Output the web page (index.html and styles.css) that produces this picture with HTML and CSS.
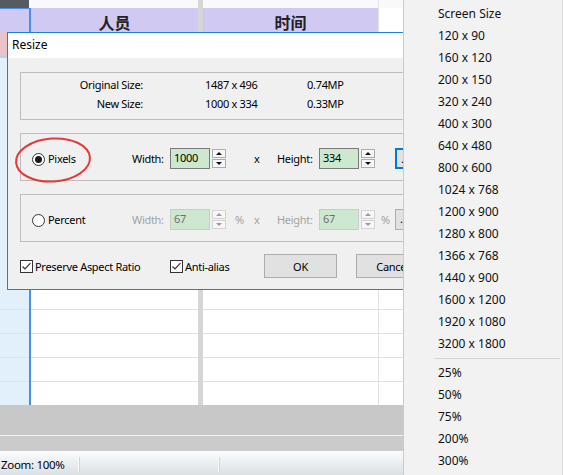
FILE: index.html
```html
<!DOCTYPE html>
<html lang="en">
<head>
<meta charset="utf-8">
<title>Resize</title>
<link rel="stylesheet" href="styles.css">
</head>
<body>
<div class="app">
  <div class="sheet">
    <div class="row r-top"><div class="c0"></div><div class="bl"></div><div class="c1"></div><div class="sep"></div><div class="c2"></div><div class="vl"></div><div class="c3"></div></div>
    <div class="row r-head"><div class="c0"></div><div class="bl"></div><div class="c1">人员</div><div class="sep"></div><div class="c2">时间</div><div class="vl"></div><div class="c3"></div></div>
    <div class="row r-body r-big"><div class="c0"><div class="pink"></div></div><div class="bl"></div><div class="c1"></div><div class="sep"></div><div class="c2"></div><div class="vl"></div><div class="c3"></div></div>
    <div class="row r-body r-n"><div class="c0"></div><div class="bl"></div><div class="c1"></div><div class="sep"></div><div class="c2"></div><div class="vl"></div><div class="c3"></div></div>
    <div class="row r-body r-n"><div class="c0"></div><div class="bl"></div><div class="c1"></div><div class="sep"></div><div class="c2"></div><div class="vl"></div><div class="c3"></div></div>
    <div class="row r-body r-n"><div class="c0"></div><div class="bl"></div><div class="c1"></div><div class="sep"></div><div class="c2"></div><div class="vl"></div><div class="c3"></div></div>
    <div class="row r-body r-last"><div class="c0"></div><div class="bl"></div><div class="c1"></div><div class="sep"></div><div class="c2"></div><div class="vl"></div><div class="c3"></div></div>
  </div>
  <div class="g1"></div>
  <div class="g-line"></div>
  <div class="g2"></div>
  <div class="status">
    <span class="zoom">Zoom: 100%</span>
    <span class="sbsep"></span>
    <span class="pane"></span>
    <span class="sbsep"></span>
  </div>

  <div class="dialog">
    <div class="titlebar">Resize</div>
    <div class="dbody">
      <div class="group info">
        <div class="info-row"><span class="lbl">Original Size:</span><span class="v1">1487 x 496</span><span class="v2">0.74MP</span></div>
        <div class="info-row"><span class="lbl">New Size:</span><span class="v1">1000 x 334</span><span class="v2">0.33MP</span></div>
      </div>

      <div class="group opt-group g-pixels">
        <label class="opt"><span class="radio on"></span><span>Pixels</span></label>
        <span class="flbl">Width:</span>
        <span class="field">1000</span>
        <span class="spin"><span class="up"></span><span class="down"></span></span>
        <span class="unit"></span>
        <span class="times">x</span>
        <span class="hlbl">Height:</span>
        <span class="field">334</span>
        <span class="spin"><span class="up"></span><span class="down"></span></span>
        <span class="unit2"></span>
        <span class="dots focus">...</span>
      </div>

      <div class="group opt-group g-percent">
        <label class="opt"><span class="radio"></span><span>Percent</span></label>
        <span class="flbl dis">Width:</span>
        <span class="field dis">67</span>
        <span class="spin dis"><span class="up"></span><span class="down"></span></span>
        <span class="unit dis">%</span>
        <span class="times dis">x</span>
        <span class="hlbl dis">Height:</span>
        <span class="field dis">67</span>
        <span class="spin dis"><span class="up"></span><span class="down"></span></span>
        <span class="unit2 dis">%</span>
        <span class="dots">...</span>
      </div>

      <div class="actions">
        <label class="chk chk1"><span class="box"><svg viewBox="0 0 11 11" width="11" height="11"><path d="M1.5 5.5 L4 8 L9.5 2.2" fill="none" stroke="#333" stroke-width="1.2"/></svg></span><span>Preserve Aspect Ratio</span></label>
        <label class="chk chk2"><span class="box"><svg viewBox="0 0 11 11" width="11" height="11"><path d="M1.5 5.5 L4 8 L9.5 2.2" fill="none" stroke="#333" stroke-width="1.2"/></svg></span><span>Anti-alias</span></label>
        <span class="btn">OK</span>
        <span class="btn">Cancel</span>
      </div>
    </div>
  </div>

  <svg class="mark" width="84" height="52" viewBox="0 0 84 52"><ellipse cx="40" cy="25" rx="37" ry="21.5" fill="none" stroke="#e23b3b" stroke-width="2" transform="rotate(-4 40 25)"/></svg>

  <div class="menu">
    <div class="mi">Screen Size</div>
    <div class="mi">120 x 90</div>
    <div class="mi">160 x 120</div>
    <div class="mi">200 x 150</div>
    <div class="mi">320 x 240</div>
    <div class="mi">400 x 300</div>
    <div class="mi">640 x 480</div>
    <div class="mi">800 x 600</div>
    <div class="mi">1024 x 768</div>
    <div class="mi">1200 x 900</div>
    <div class="mi">1280 x 800</div>
    <div class="mi">1366 x 768</div>
    <div class="mi">1440 x 900</div>
    <div class="mi">1600 x 1200</div>
    <div class="mi">1920 x 1080</div>
    <div class="mi">3200 x 1800</div>
    <div class="msep"></div>
    <div class="mi">25%</div>
    <div class="mi">50%</div>
    <div class="mi">75%</div>
    <div class="mi">200%</div>
    <div class="mi">300%</div>
  </div>
</div>
</body>
</html>
```

FILE: styles.css
```css
* { box-sizing: border-box; margin: 0; padding: 0; }
html, body { width: 563px; height: 475px; overflow: hidden; }
body {
  font-family: "Noto Sans", "Liberation Sans", sans-serif;
  font-size: 11px;
  color: #000;
  background: #fff;
}
.app { position: relative; width: 563px; height: 475px; overflow: hidden; }

/* spreadsheet background */
.row { display: grid; grid-template-columns: 29px 2px 167px 5px 175px 1px 1fr; }
.r-top { height: 8px; background: #f8f9fa; }
.r-top .c0 { background: #575b60; }
.r-top .sep { background: #d6d6d6; }
.r-top .vl { background: #e6e6e6; }

.r-head { height: 24px; }
.r-head .c0 { background: #d0c9f2; border-top: 1px solid #4a8ef0; }
.r-head .bl { background: #4a8ef0; }
.r-head .c1, .r-head .c2 {
  background: #d0c9f2;
  display: flex; align-items: center; justify-content: center;
  font-family: "Noto Sans CJK SC", "Noto Sans", sans-serif;
  font-weight: 700; font-size: 16px; color: #222;
  padding-top: 2px;
}
.r-head .sep { background: #d6d6d6; }
.r-head .vl { background: #e3e3e3; }
.r-head .c3 { background: #fff; }

.r-body > div { border-bottom: 1px solid #e1e1e1; }
.r-body .c0 { background: #e2f0fc; }
.r-body .bl { background: #4a8ef0; border-bottom: none; }
.r-body .sep { background: #d6d6d6; border-bottom: none; }
.r-body .vl { background: #e1e1e1; }
.r-big { height: 278px; }
.r-n { height: 24px; }
.r-last { height: 23px; }
.r-last > div { border-bottom: none; }
.pink { height: 26px; background: #e8c3c9; border-bottom: 2px solid #bcd0de; }

.g1 { height: 30px; background: #c8c8c8; }
.g-line { height: 1px; background: #f3f3f3; }
.g2 { height: 15px; background: #cbcbcb; }
.status {
  height: 24px;
  background: linear-gradient(#fbfcfc, #dbe0e4);
  display: flex; align-items: center;
  padding-top: 3px;
  font-size: 11.5px;
  letter-spacing: -0.3px;
}
.zoom { width: 78px; padding-left: 1px; }
.pane { width: 139px; }
.sbsep { width: 1px; height: 15px; background: #f9fafa; box-shadow: 1px 0 0 #cfd4d8; }

/* dialog */
.dialog {
  position: absolute; left: 7px; top: 32px;
  width: 440px; height: 258px;
  border: 1px solid #1883d7;
  background: #f0f0f0;
  letter-spacing: -0.3px;
}
.titlebar { height: 25px; background: #fff; padding-left: 4px; line-height: 24px; font-size: 12px; letter-spacing: 0; }
.dbody { padding: 14px 0 0 12px; }
.group { border: 1px solid #bdbdbd; width: 420px; }

.info { padding: 2px 0 6px; margin-bottom: 13px; }
.info-row { display: flex; height: 19px; align-items: center; }
.lbl { width: 122px; text-align: right; }
.v1 { margin-left: 62px; width: 102px; }

.opt-group { display: flex; align-items: center; height: 48px; padding: 14px 0 11px 11px; }
.g-pixels { margin-bottom: 13px; }
.opt { width: 100px; display: flex; align-items: center; gap: 3px; }
.radio {
  width: 13px; height: 13px; border: 1px solid #333; border-radius: 50%;
  background: #fff; display: flex; align-items: center; justify-content: center;
  margin-top: 1px;
}
.radio.on::after { content: ""; width: 7px; height: 7px; border-radius: 50%; background: #1a1a1a; }
.flbl { width: 38px; }
.hlbl { width: 42px; }
.field {
  width: 40px; height: 21px;
  border: 1px solid #7a7a7a; background: #cde8cf;
  padding-left: 3px; line-height: 18px;
}
.spin { margin-left: 2px; width: 14px; height: 19px; display: flex; flex-direction: column; gap: 1px; }
.spin span {
  height: 9px; border: 1px solid #adadad; background: #f7f7f7;
  display: flex; align-items: center; justify-content: center;
}
.spin .up::after { content: ""; border-left: 3px solid transparent; border-right: 3px solid transparent; border-bottom: 3px solid #111; }
.spin .down::after { content: ""; border-left: 3px solid transparent; border-right: 3px solid transparent; border-top: 3px solid #111; }
.unit { width: 27px; padding-left: 9px; }
.times { width: 24px; padding-left: 1px; }
.unit2 { width: 20px; padding-left: 6px; }
.dots {
  width: 30px; height: 21px;
  border: 1px solid #adadad; background: #e1e1e1;
  padding-left: 4px; line-height: 17px;
}
.dots.focus { border: 2px solid #0078d7; }

.dis { color: #a3a3a3; }
.field.dis { border-color: #cacaca; color: #6f6f6f; }
.spin.dis span { border-color: #d3d3d3; }
.spin.dis .up::after { border-bottom-color: #9a9a9a; }
.spin.dis .down::after { border-top-color: #9a9a9a; }

.actions { display: flex; align-items: center; margin-top: 12px; height: 24px; }
.chk { display: flex; align-items: center; gap: 2px; }
.chk1 { width: 150px; }
.chk2 { width: 94px; }
.box {
  width: 13px; height: 13px; border: 1px solid #333; background: #fff;
  display: flex; align-items: center; justify-content: center;
}
.btn {
  width: 73px; height: 24px; flex: none;
  border: 1px solid #adadad; background: #e1e1e1;
  display: flex; align-items: center; justify-content: center;
}
.btn + .btn { margin-left: 19px; }

.mark { position: absolute; left: 13px; top: 135px; }

/* dropdown menu */
.menu {
  position: absolute; left: 403px; top: 0;
  width: 160px; height: 475px;
  background: #f2f2f2;
  border-left: 1px solid #cbcbcb;
  border-right: 1px solid #dcdcdc;
  padding-top: 3px;
  font-size: 12px;
  color: #111;
}
.mi { height: 22px; line-height: 21px; padding-left: 34px; }
.msep { height: 1px; background: #d5d5d5; margin: 3px 2px 3px 30px; }
```
